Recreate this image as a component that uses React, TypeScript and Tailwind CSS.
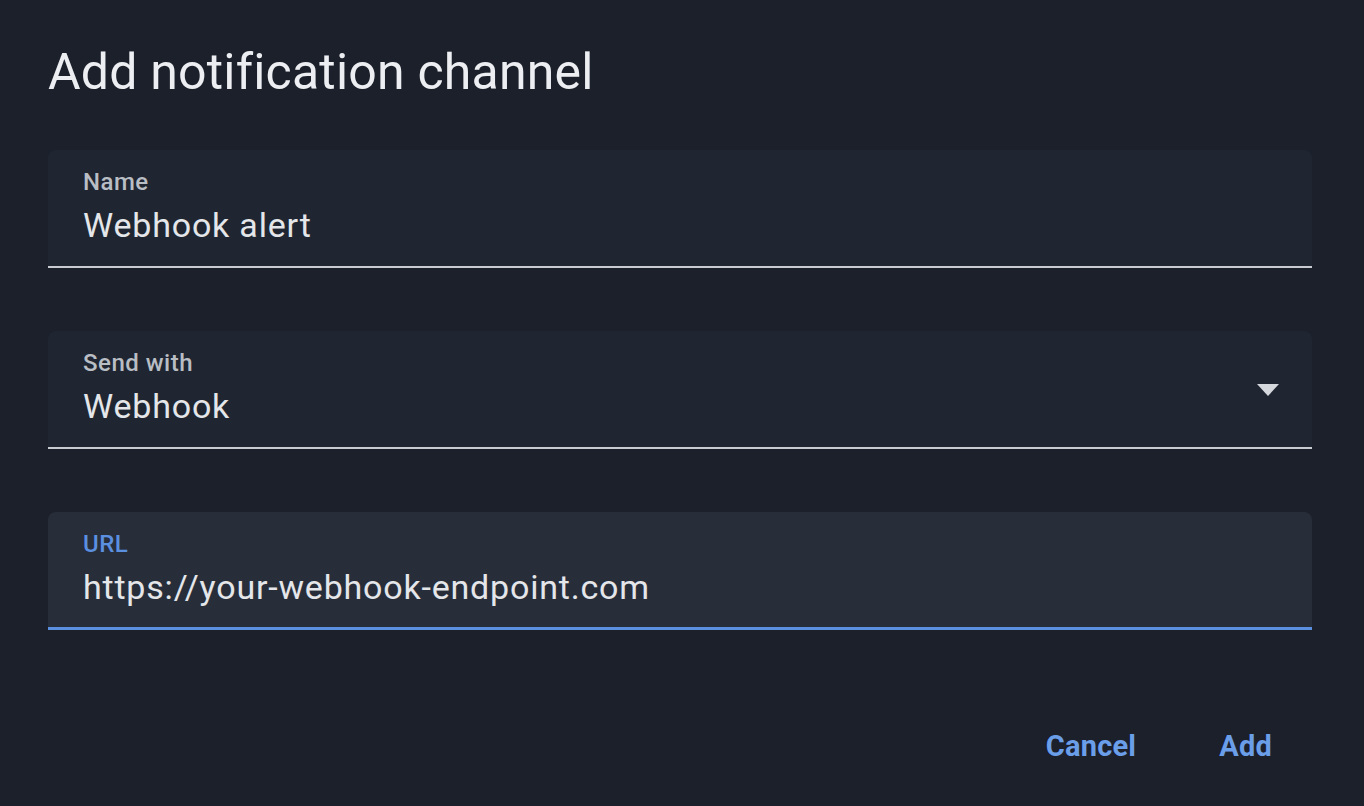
import React from "react";

function Field({
  label,
  value,
  focused,
  select,
}: {
  label: string;
  value: string;
  focused?: boolean;
  select?: boolean;
}) {
  return (
    <div
      className={`relative flex h-[118px] items-center rounded-t-[8px] pl-[35px] pr-[32px] ${
        focused ? "bg-[#272e3a] border-b-[3px] border-[#5b8fe0]" : "bg-[#1f2631] border-b-[2px] border-[#c8cbd0]"
      }`}
    >
      <div className="flex flex-1 flex-col pb-[2px]">
        <span
          className={`text-[24px] leading-[28px] font-medium tracking-[0.5px] ${
            focused ? "text-[#5b8fe0]" : "text-[#b9bdc4]"
          }`}
        >
          {label}
        </span>
        <span className="mt-[8px] text-[34px] leading-[42px] tracking-[0.8px] text-[#e4e6ea]">{value}</span>
      </div>
      {select && (
        <svg width="24" height="14" viewBox="0 0 24 14" className="mt-[2px]">
          <path d="M1 1 L23 1 L12 13 Z" fill="#d5d8dd" />
        </svg>
      )}
    </div>
  );
}

export default function App() {
  return (
    <div
      className="min-h-[806px] w-full bg-[#1b202b] px-[48px] pt-[44px]"
      style={{ fontFamily: "Roboto, 'Liberation Sans', sans-serif" }}
    >
      <h1 className="text-[50px] leading-[56px] font-normal tracking-[0.2px] text-[#eceef1]">Add notification channel</h1>
      <div className="mt-[50px] flex flex-col gap-[63px] pr-[4px]">
        <Field label="Name" value="Webhook alert" />
        <Field label="Send with" value="Webhook" select />
        <Field label="URL" value="https://your-webhook-endpoint.com" focused />
      </div>
      <div className="mt-[98px] flex justify-end gap-[83px] pr-[44px]">
        <button className="text-[29px] leading-[36px] font-bold tracking-[0.2px] text-[#6b9ee8]">Cancel</button>
        <button className="text-[29px] leading-[36px] font-bold tracking-[0.2px] text-[#6b9ee8]">Add</button>
      </div>
    </div>
  );
}
